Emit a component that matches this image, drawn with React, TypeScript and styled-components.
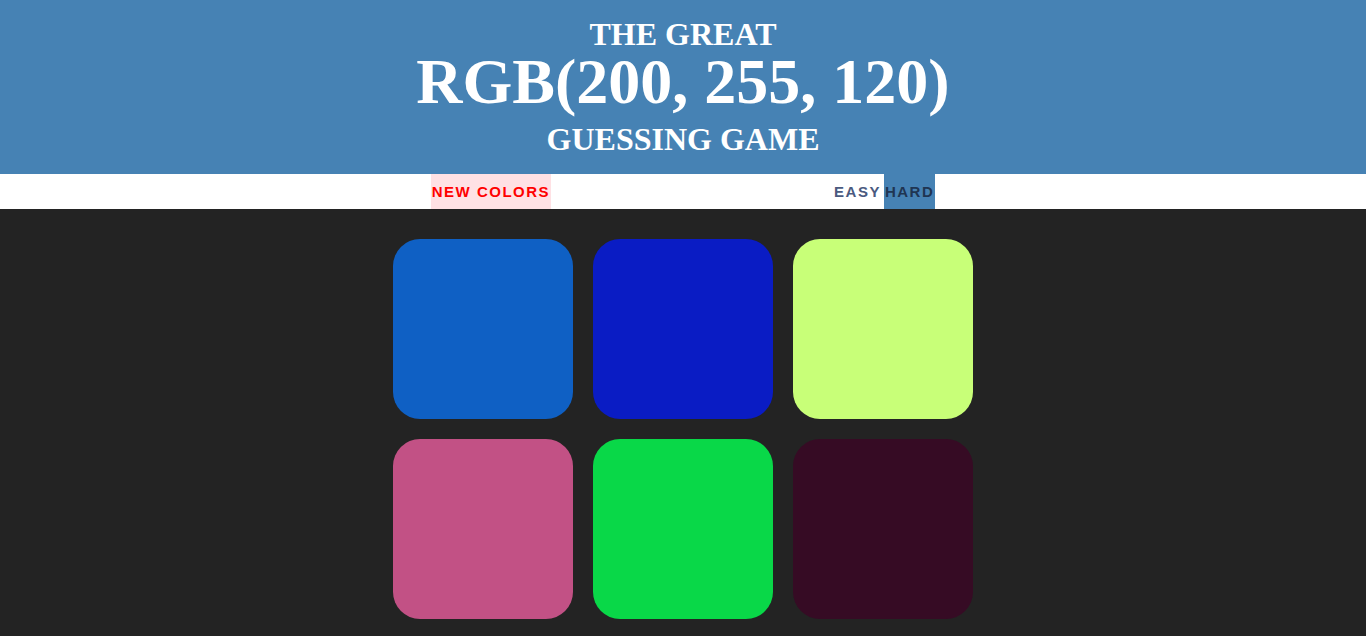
import React from "react";
import styled, { createGlobalStyle } from "styled-components";

const GlobalStyle = createGlobalStyle`
  html, body {
    margin: 0;
    padding: 0;
    min-height: 100%;
    background: #232323;
  }
  body {
    font-family: "Liberation Sans", Arial, sans-serif;
  }
`;

const Header = styled.h1`
  margin: 0;
  box-sizing: border-box;
  height: 174px;
  padding-top: 18px;
  background: steelblue;
  color: #ffffff;
  text-align: center;
  text-transform: uppercase;
  font-family: "Liberation Serif", "Times New Roman", serif;
  font-weight: 700;
`;

const Line = styled.span<{ $big?: boolean }>`
  display: block;
  font-size: ${(p) => (p.$big ? "64px" : "32px")};
  line-height: ${(p) => (p.$big ? "64px" : "32px")};
  padding-bottom: ${(p) => (p.$big ? "9px" : "0")};
`;

const Stripe = styled.div`
  height: 35px;
  background: #ffffff;
  display: flex;
  justify-content: center;
  align-items: stretch;
`;

const ModeGroup = styled.div`
  display: flex;
  align-items: stretch;
  gap: 2px;
`;

const Button = styled.button<{ $variant?: "reset" | "mode"; $selected?: boolean }>`
  border: none;
  outline: none;
  margin: 0;
  padding: 0 1px 0 1px;
  height: 100%;
  line-height: 35px;
  font-family: "Liberation Sans", Arial, sans-serif;
  font-size: 15px;
  font-weight: 700;
  letter-spacing: 1.5px;
  text-transform: uppercase;
  cursor: pointer;
  background: ${(p) =>
    p.$variant === "reset" ? "#ffe1e4" : p.$selected ? "steelblue" : "transparent"};
  color: ${(p) =>
    p.$variant === "reset" ? "#ff0000" : p.$selected ? "#1f3552" : "#4a5a80"};
`;

const Message = styled.span`
  display: inline-block;
  width: 282px;
`;

const Board = styled.div`
  width: 600px;
  box-sizing: border-box;
  margin: 20px auto 0;
  padding: 10px;
  display: grid;
  grid-template-columns: repeat(3, 180px);
  gap: 20px;
`;

const Square = styled.div<{ $color: string }>`
  width: 180px;
  height: 180px;
  border-radius: 15%;
  background: ${(p) => p.$color};
`;

const colors = [
  "rgb(15, 96, 196)",
  "rgb(10, 28, 196)",
  "rgb(200, 255, 120)",
  "rgb(194, 81, 133)",
  "rgb(9, 216, 72)",
  "rgb(54, 11, 36)",
];

export default function App() {
  return (
    <>
      <GlobalStyle />
      <Header>
        <Line>The Great</Line>
        <Line $big>RGB(200, 255, 120)</Line>
        <Line>Guessing Game</Line>
      </Header>
      <Stripe>
        <Button $variant="reset">New Colors</Button>
        <Message />
        <ModeGroup>
          <Button $variant="mode">Easy</Button>
          <Button $variant="mode" $selected>
            Hard
          </Button>
        </ModeGroup>
      </Stripe>
      <Board>
        {colors.map((c, i) => (
          <Square key={i} $color={c} />
        ))}
      </Board>
    </>
  );
}
